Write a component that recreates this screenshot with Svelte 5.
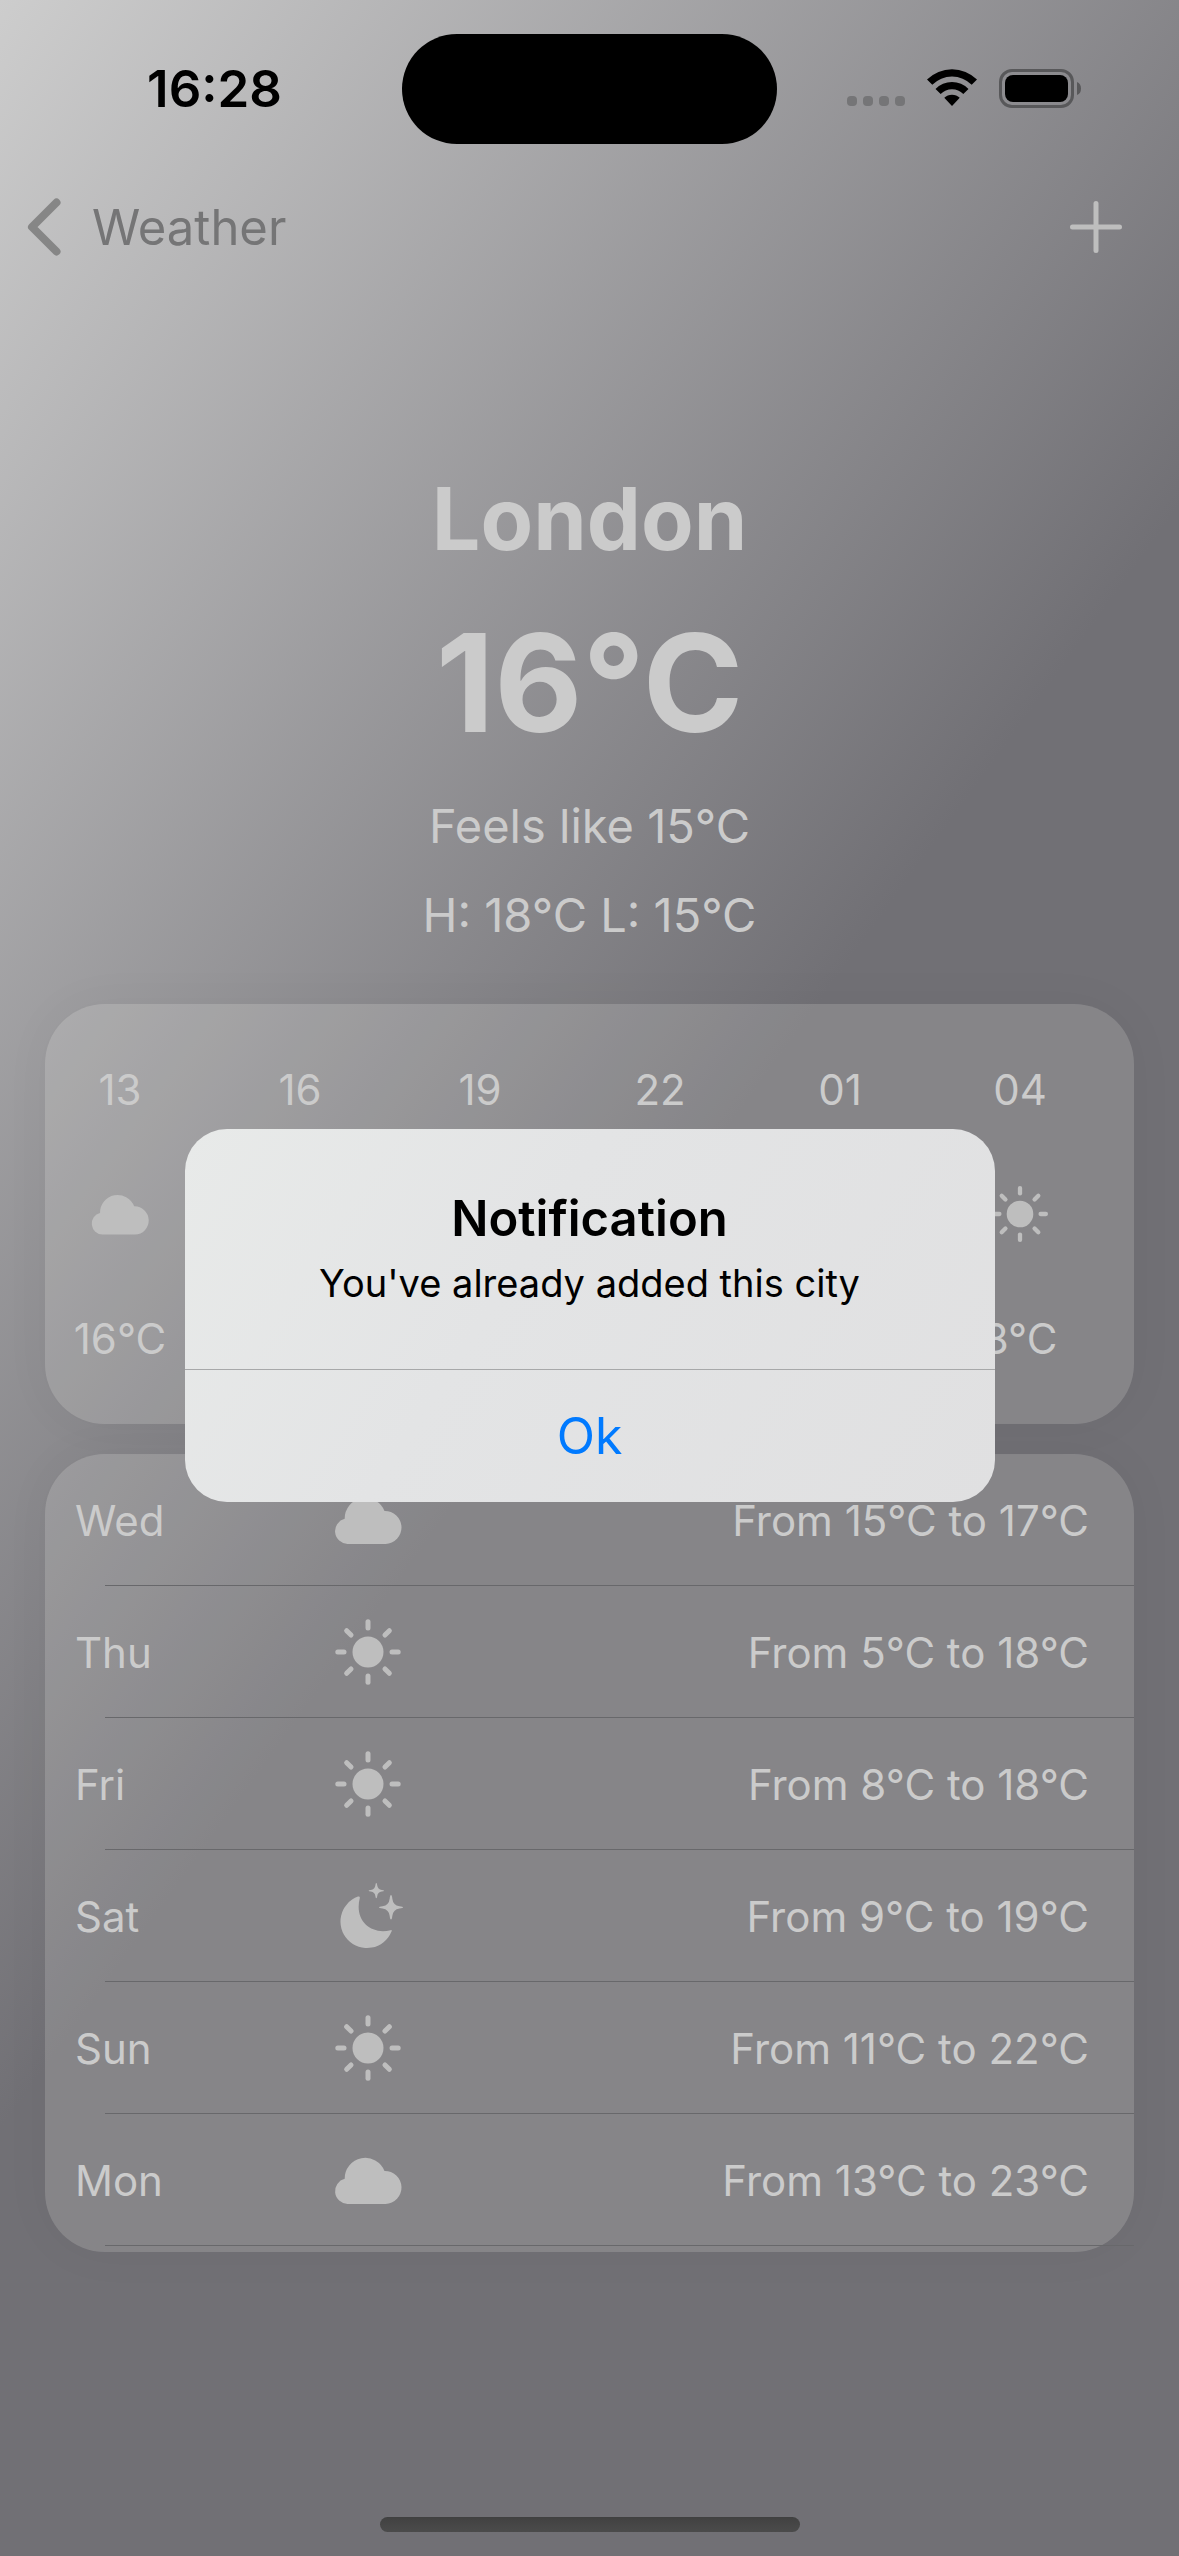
<script>
  const hours = [
    { hour: '13', icon: 'cloud', temp: '16°C' },
    { hour: '16' },
    { hour: '19' },
    { hour: '22' },
    { hour: '01' },
    { hour: '04', icon: 'sun', temp: '8°C' }
  ];

  const days = [
    { day: 'Wed', icon: 'cloud', range: 'From 15°C to 17°C' },
    { day: 'Thu', icon: 'sun', range: 'From 5°C to 18°C' },
    { day: 'Fri', icon: 'sun', range: 'From 8°C to 18°C' },
    { day: 'Sat', icon: 'moon', range: 'From 9°C to 19°C' },
    { day: 'Sun', icon: 'sun', range: 'From 11°C to 22°C' },
    { day: 'Mon', icon: 'cloud', range: 'From 13°C to 23°C' }
  ];

  const rays = [0, 45, 90, 135, 180, 225, 270, 315];
</script>

{#snippet weatherIcon(name)}
  <svg class="weather-icon" viewBox="0 0 70 70" aria-hidden="true">
    {#if name === 'cloud'}
      <path d="M14.5 59A12.8 12.8 0 0 1 11.7 33.8A20.6 20.6 0 0 1 51.5 26A16.5 16.5 0 0 1 52.5 59Z" />
    {:else if name === 'sun'}
      <circle cx="35" cy="35" r="15.5" />
      {#each rays as angle}
        <path class="ray" d="M35 11V4.800" transform="rotate({angle} 35 35)" />
      {/each}
    {:else if name === 'moon'}
      <path d="M25 15.6A26.5 26.5 0 1 0 58.4 50.8Q59.6 48.6 57.5 49.2C38 54 21 40 26.8 17Q27 14.8 25 15.6Z" />
      <path d="M58 14Q59 14 59.3 17.5Q60 24.3 66.500 25.200Q70 25.500 70 26.300Q70 27.200 66.500 27.500Q60 28.500 59.300 35Q59 38.500 58 38.500Q57 38.500 56.700 35Q56 28.500 49.500 27.500Q46 27.200 46 26.300Q46 25.500 49.500 25.200Q56 24.300 56.700 17.500Q57 14 58 14Z" />
      <path d="M43.300 2Q44 2 44.200 4.200Q44.700 8.300 48.800 9Q51 9.200 51 9.800Q51 10.400 48.800 10.600Q44.700 11.300 44.200 15.200Q44 17.300 43.300 17.300Q42.600 17.300 42.400 15.200Q41.900 11.300 37.800 10.600Q35.600 10.400 35.600 9.800Q35.600 9.200 37.800 9Q41.900 8.300 42.400 4.200Q42.600 2 43.300 2Z" />
    {/if}
  </svg>
{/snippet}

<div class="screen">
  <header class="status">
    <time class="clock">16:28</time>
    <div class="island"></div>
    <div class="indicators">
      <div class="cellular">
        <i></i><i></i><i></i><i></i>
      </div>
      <svg class="wifi" viewBox="0 0 50 37" aria-hidden="true">
        <path d="M0 10.500A35.500 35.500 0 0 1 50 10.500L44.700 15.700A28 28 0 0 0 5.300 15.700Z" />
        <path d="M8.500 20A23 23 0 0 1 41.500 20L36.300 25A16 16 0 0 0 13.700 25Z" />
        <path d="M17.300 28.800A11 11 0 0 1 32.700 28.800L25 37Z" />
      </svg>
      <svg class="battery" viewBox="0 0 82 39" aria-hidden="true">
        <rect class="shell" x="1.500" y="1.500" width="72" height="36" rx="11.500" />
        <rect x="6" y="6" width="63" height="27" rx="8" />
        <path class="nub" d="M78 13Q82 14.500 82 19.500Q82 24.500 78 26Z" />
      </svg>
    </div>
  </header>

  <nav class="nav">
    <button class="back" type="button">
      <svg viewBox="0 0 34 58" aria-hidden="true"><path d="M29.500 4.500L5 29L29.500 53.500" /></svg>
      <span>Weather</span>
    </button>
    <button class="add" type="button" aria-label="Add city">
      <svg viewBox="0 0 54 54" aria-hidden="true"><path d="M27 3.500V50.500M3.500 27H50.500" /></svg>
    </button>
  </nav>

  <main>
    <section class="hero">
      <h1>London</h1>
      <p class="temperature">16°C</p>
      <p class="detail">Feels like 15°C</p>
      <p class="detail">H: 18°C L: 15°C</p>
    </section>

    <ul class="card hourly">
      {#each hours as item}
        <li>
          <span>{item.hour}</span>
          {@render weatherIcon(item.icon)}
          <span>{item.temp ?? ''}</span>
        </li>
      {/each}
    </ul>

    <ul class="card daily">
      {#each days as item}
        <li>
          <span>{item.day}</span>
          {@render weatherIcon(item.icon)}
          <span class="range">{item.range}</span>
        </li>
      {/each}
    </ul>
  </main>

  <div class="home"></div>

  <div class="overlay">
    <div class="alert" role="alertdialog" aria-labelledby="alert-title" aria-describedby="alert-text">
      <div class="alert-body">
        <h2 id="alert-title">Notification</h2>
        <p id="alert-text">You've already added this city</p>
      </div>
      <button class="ok" type="button">Ok</button>
    </div>
  </div>
</div>

<style>
  :global(body) {
    margin: 0;
  }

  .screen {
    position: relative;
    box-sizing: border-box;
    display: flex;
    flex-direction: column;
    min-height: 100vh;
    background: linear-gradient(126deg, #cdcdcd 0, #717075 1252px);
    color: #cbcbcb;
    font-family: Inter, 'Liberation Sans', sans-serif;
    font-size: 42px;
    line-height: 51px;
  }

  h1,
  h2,
  p,
  ul {
    margin: 0;
    padding: 0;
  }

  ul {
    list-style: none;
  }

  button {
    border: 0;
    padding: 0;
    background: none;
    font: inherit;
    cursor: pointer;
  }

  svg {
    display: block;
    flex: none;
  }

  .status {
    display: grid;
    grid-template-columns: 1fr 375px 1fr;
    align-items: center;
    box-sizing: border-box;
    height: 161px;
    padding-top: 16px;
    color: #000;
  }

  .clock {
    padding-left: 27px;
    text-align: center;
    font-size: 51px;
    font-weight: 600;
  }

  .island {
    height: 110px;
    border-radius: 55px;
    background: #000;
  }

  .indicators {
    display: flex;
    justify-content: flex-end;
    align-items: flex-end;
    gap: 22px;
    padding-right: 98px;
  }

  .cellular {
    display: flex;
    gap: 6px;
    padding-bottom: 2px;
  }

  .cellular i {
    width: 10px;
    height: 10px;
    border-radius: 4px;
    background: #757577;
  }

  .wifi {
    width: 50px;
    height: 37px;
    padding-bottom: 2px;
  }

  .battery {
    width: 82px;
    height: 39px;
  }

  .shell {
    fill: none;
    stroke: #58585a;
    stroke-width: 3;
  }

  .nub {
    fill: #58585a;
  }

  .nav {
    display: flex;
    justify-content: space-between;
    align-items: center;
    height: 132px;
    padding: 0 56px 0 27px;
  }

  .back {
    display: flex;
    align-items: center;
    gap: 31px;
    color: #757576;
    font-size: 49px;
  }

  .back svg {
    width: 34px;
    height: 58px;
    fill: none;
    stroke: #868686;
    stroke-width: 8;
    stroke-linecap: round;
    stroke-linejoin: round;
  }

  .add svg {
    width: 54px;
    height: 54px;
    fill: none;
    stroke: #bebebe;
    stroke-width: 5;
    stroke-linecap: round;
  }

  .hero {
    display: flex;
    flex-direction: column;
    gap: 30px;
    padding: 175px 45px 60px;
    text-align: center;
  }

  h1 {
    font-size: 86px;
    font-weight: 700;
    line-height: 102px;
  }

  .temperature {
    font-size: 136px;
    font-weight: 700;
    line-height: 166px;
  }

  .detail {
    font-size: 47px;
    line-height: 59px;
  }

  .card {
    margin: 0 45px 30px;
    border-radius: 60px;
    background: rgba(255, 255, 245, 0.15);
    box-shadow: 0 0 50px rgba(0, 0, 0, 0.04);
  }

  .weather-icon {
    width: 70px;
    height: 70px;
    fill: #bebebe;
  }

  .ray {
    fill: none;
    stroke: #bebebe;
    stroke-width: 5;
    stroke-linecap: round;
  }

  .hourly {
    display: grid;
    grid-template-columns: repeat(6, 1fr);
    gap: 30px;
    padding: 60px 39px 60px 0;
  }

  .hourly li {
    display: flex;
    flex-direction: column;
    align-items: center;
    gap: 69px;
  }

  .hourly span {
    min-height: 51px;
  }

  .hourly .weather-icon {
    width: 60px;
    height: 60px;
  }

  .daily {
    padding-bottom: 6px;
  }

  .daily li {
    position: relative;
    display: grid;
    grid-template-columns: 258px 70px 1fr;
    align-items: center;
    height: 132px;
    padding: 0 45px 0 30px;
  }

  .daily li::after {
    content: '';
    position: absolute;
    right: 0;
    bottom: 0;
    left: 60px;
    height: 1px;
    background: #68686b;
  }

  .range {
    text-align: right;
  }

  .home {
    width: 420px;
    height: 15px;
    margin: auto auto 24px;
    border-radius: 8px;
    background: linear-gradient(#414141, #4b4b4b);
  }

  .overlay {
    position: absolute;
    inset: 0;
    display: grid;
    place-items: center;
    padding: 177px 0 102px;
  }

  .alert {
    width: 810px;
    max-width: 90%;
    border-radius: 42px;
    overflow: hidden;
    background: linear-gradient(123deg, #e8eae9, #e3e4e5 40%, #e0e0e1);
    color: #000;
    text-align: center;
  }

  .alert-body {
    padding: 57px 48px 55px;
    border-bottom: 1px solid #a7a8a9;
  }

  h2 {
    font-size: 49px;
    font-weight: 600;
    line-height: 66px;
  }

  .alert-body p {
    font-size: 38px;
    line-height: 62px;
  }

  .ok {
    width: 100%;
    height: 132px;
    color: #007aff;
    font-size: 50px;
  }
</style>
